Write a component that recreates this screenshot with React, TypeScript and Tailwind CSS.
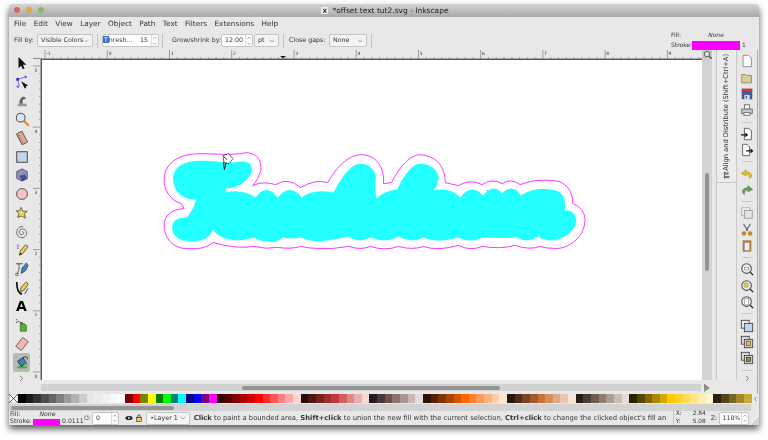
import { ChevronDown, ChevronRight, ChevronLeft, ChevronUp } from 'lucide-react'
import type { ReactNode } from 'react'

const menus = ['File', 'Edit', 'View', 'Layer', 'Object', 'Path', 'Text', 'Filters', 'Extensions', 'Help']

const swatches = [
  '#000000', '#1a1a1a', '#333333', '#4d4d4d', '#666666', '#808080', '#999999', '#b3b3b3', '#cccccc', '#e6e6e6', '#ececec', '#f2f2f2', '#f9f9f9', '#ffffff',
  '#800000', '#ff0000', '#808000', '#ffff00', '#008000', '#00ff00', '#008080', '#00ffff', '#000080', '#0000ff', '#800080', '#ff00ff',
  '#2b0000', '#550000', '#800000', '#aa0000', '#d40000', '#ff0000', '#ff2a2a', '#ff5555', '#ff8080', '#ffaaaa', '#ffd5d5',
  '#280b0b', '#501616', '#782121', '#a02c2c', '#c83737', '#d35f5f', '#de8787', '#e9afaf', '#f4d7d7',
  '#241c1c', '#483737', '#6c5353', '#916f6f', '#ac9393', '#c8b7b7', '#e3dbdb',
  '#2b1100', '#552200', '#803300', '#aa4400', '#d45500', '#ff6600', '#ff7f2a', '#ff9955', '#ffb380', '#ffccaa', '#ffe6d5',
  '#28170b', '#502d16', '#784421', '#a05a2c', '#c87137', '#d38d5f', '#deaa87', '#e9c6af', '#f4e3d7',
  '#241f1c', '#483e37', '#6c5d53', '#917c6f', '#ac9d93', '#c8beb7', '#e3dedb',
  '#2b2200', '#554400', '#806600', '#aa8800', '#d4aa00', '#ffcc00', '#ffd42a', '#ffdd55', '#ffe680', '#ffeeaa', '#fff6d5',
  '#28220b', '#504416', '#786721', '#a0892c', '#c8ab37',
]

function Ico({ children }: { children: ReactNode }) {
  return (
    <svg viewBox="0 0 16 16" className="h-[14px] w-[14px]">
      {children}
    </svg>
  )
}

const leftTools: ReactNode[] = [
  <path d="M4 1 L4 14 L7 11 L9 15 L11 14 L9 10 L13 10 Z" fill="#111" />,
  <g><path d="M3 5 L5 13 M3 5 L12 2" stroke="#6a6ac8" fill="none" /><rect x="1.5" y="3.5" width="3" height="3" fill="#2020e0" /><rect x="11" y="1" width="2.5" height="2.5" fill="#6a6ae0" /><rect x="2" y="12" width="2.5" height="2.5" fill="#6a6ae0" /><path d="M7 7 L15 12 L12 13 L13 15 L11 15 Z" fill="#111" /></g>,
  <g><path d="M3 14 L14 14 L13 11 L3 11 Z" fill="#999" /><path d="M5 11 C5 4 9 2 12 4 C13 6 11 6 10 6 C8 7 9 10 9 11 Z" fill="#666" /></g>,
  <g><path d="M10 10 L15 15" stroke="#e0952a" strokeWidth="2.6" strokeLinecap="round" /><circle cx="6.5" cy="6.5" r="5" fill="#d6e6f4" stroke="#555" strokeWidth="1.2" /></g>,
  <g transform="rotate(-28 8 8)"><rect x="4.5" y="1" width="7" height="14" fill="#e8a890" stroke="#555" /><path d="M4.5 4h3M4.5 7h3M4.5 10h3M4.5 13h3" stroke="#555" strokeWidth="0.7" /></g>,
  <rect x="2" y="2" width="12" height="12" fill="#c4d6ea" stroke="#444" strokeWidth="1.1" />,
  <g><path d="M8 1 L14 4 L14 12 L8 15 L2 12 L2 4 Z" fill="#8f8fc0" stroke="#555" /><path d="M5 9 L11 7 L14 12 L8 15 Z" fill="#4a4a96" /></g>,
  <circle cx="8" cy="8" r="6.2" fill="#f8c0c8" stroke="#555" strokeWidth="1.1" />,
  <path d="M7 1.5 L9 6 L14 6 L10.5 9 L12 14 L7.5 11.5 L3 13 L4.5 9 L1.5 5.5 L5.5 5.5 Z" fill="#f2d84a" stroke="#555" />,
  <path d="M8 8 C9.5 6.8 11 9 9 10.5 C6.5 12 4 9.5 5 7 C6.5 3.5 11.5 3.8 13 7.5 C14.3 11 11.5 14.5 8 14.5 C4 14.5 1.5 11 2 7.5 C2.6 3.5 6 1.3 9.5 1.8" fill="none" stroke="#666" strokeWidth="1.1" />,
  <g><path d="M2 3 C4 1 5 3 3 5 C2 7 4 7 4 6" fill="none" stroke="#555" strokeWidth="0.9" /><path d="M5 14 L6 9 L12 2 L15 4 L9 12 Z" fill="#f2cf4a" stroke="#444" strokeWidth="0.9" /><path d="M5 14 L6 11 L8 12.5 Z" fill="#222" /></g>,
  <g><path d="M1 2 L9 2 M4 2 C6 6 4 11 2 14" fill="none" stroke="#444" /><rect x="1" y="13" width="2.5" height="2.5" fill="#fff" stroke="#333" strokeWidth="0.7" /><path d="M7 13 L8 7 L13 1 L15 4 L12 10 Z" fill="#3c83c8" stroke="#333" strokeWidth="0.8" /></g>,
  <g><path d="M2 1 C2 9 4 14 8 15" fill="none" stroke="#111" strokeWidth="2" /><path d="M6 12 L7 7 L13 1 L15 4 L10 11 Z" fill="#f2cf4a" stroke="#333" strokeWidth="0.8" /><path d="M11 15 L15 8" stroke="#3c83c8" strokeWidth="1.2" /></g>,
  null,
  <g><path d="M1 2h1.5M3 4h1.5M1 5h1.5" stroke="#333" strokeWidth="1" /><path d="M5 4 L9 5 L9 7 L6 7 Z" fill="#555" /><path d="M6 8 C6 6 13 6 13 9 L13 15 L6 15 Z" fill="#5cb030" stroke="#2d6a12" strokeWidth="0.8" /></g>,
  <g transform="rotate(38 8 8)"><rect x="4" y="1.5" width="8" height="13" fill="#f4b8a8" stroke="#666" /></g>,
  <g><ellipse cx="8" cy="14" rx="6" ry="1.5" fill="#4fa83a" /><path d="M3 7 L9 3 L13 9 L7 13 Z" fill="#3c83c8" stroke="#222" strokeWidth="0.9" /><path d="M9 3 C13 1 15 3 14 5" fill="none" stroke="#222" /><path d="M12 8 L14 12" stroke="#4fa83a" strokeWidth="1.4" /></g>,
]

const topRight: (ReactNode | 'sep')[] = [
  <path d="M3.5 1.5 H10 L13 4.5 V14.5 H3.5 Z" fill="#fff" stroke="#888" />,
  <path d="M2 4 H6 L7 5 H13 V13.5 H2 Z" fill="#d8d098" stroke="#8a8460" />,
  <g><rect x="2" y="2" width="12" height="12" fill="#3a5aa8" /><rect x="2" y="2" width="12" height="3" fill="#e03030" /><rect x="5" y="9" width="6" height="5" fill="#e8e8e8" /><rect x="6.5" y="10" width="1.6" height="3" fill="#3a5aa8" /></g>,
  <g><rect x="5" y="2" width="6" height="5" fill="#fff" stroke="#666" /><rect x="2" y="7" width="12" height="5" fill="#ccc" stroke="#666" /><rect x="4.5" y="11" width="7" height="3" fill="#fff" stroke="#666" /></g>,
  'sep',
  <g><path d="M5 1.5 H10 L13 4.5 V14.5 H5 Z" fill="#fff" stroke="#555" /><path d="M1 9 H8 M6 7 L8.5 9 L6 11" fill="none" stroke="#111" strokeWidth="1.2" /></g>,
  <g><path d="M3 1.5 H8 L11 4.5 V14.5 H3 Z" fill="#fff" stroke="#555" /><path d="M7 9 H14 M12 7 L14.5 9 L12 11" fill="none" stroke="#111" strokeWidth="1.2" /></g>,
  'sep',
  <path d="M7 3 L1.5 7.5 L7 10 L7 8 C10 8 11 10 11 13 C14 12 15 6 7 5.5 Z" fill="#e8c020" stroke="#9a8010" strokeWidth="0.6" />,
  <path d="M9 3 L14.5 7.5 L9 10 L9 8 C6 8 5 10 5 13 C2 12 1 6 9 5.5 Z" fill="#6aa060" stroke="#4a7040" strokeWidth="0.6" />,
  'sep',
  <g><rect x="2" y="2" width="9" height="9" fill="#f0f0f0" stroke="#aaa" /><rect x="5" y="5" width="9" height="9" fill="#e4e4e4" stroke="#999" /></g>,
  <g><path d="M4 1 L9 9 M12 1 L7 9" stroke="#666" strokeWidth="1.2" /><circle cx="4.5" cy="12" r="2.6" fill="#c8862a" /><circle cx="11.5" cy="12" r="2.6" fill="#c8862a" /></g>,
  <g><rect x="3" y="1.5" width="10" height="13" fill="#b87a30" /><rect x="5" y="4" width="6" height="9" fill="#f2f2f2" stroke="#888" strokeWidth="0.6" /></g>,
  'sep',
  <g><path d="M11 11 L15 15" stroke="#222" strokeWidth="1.6" /><circle cx="7.5" cy="7.5" r="5.5" fill="#e8eef4" stroke="#555" strokeWidth="1.2" /><rect x="5" y="6" width="5" height="3" fill="#fff" stroke="#777" strokeWidth="0.6" /></g>,
  <g><path d="M11 11 L15 15" stroke="#222" strokeWidth="1.6" /><circle cx="7.5" cy="7.5" r="5.5" fill="#e8eef4" stroke="#555" strokeWidth="1.2" /><circle cx="7" cy="7" r="2.6" fill="#e8c83a" stroke="#666" strokeWidth="0.5" /></g>,
  <g><path d="M11 11 L15 15" stroke="#222" strokeWidth="1.6" /><circle cx="7.5" cy="7.5" r="5.5" fill="#e8eef4" stroke="#555" strokeWidth="1.2" /><rect x="5.5" y="4" width="4" height="7" fill="#fff" stroke="#777" strokeWidth="0.6" /></g>,
  'sep',
  <g><rect x="1.5" y="1.5" width="9" height="9" fill="#eee" stroke="#444" /><rect x="5" y="5" width="9.5" height="9.5" fill="#bcd4ec" stroke="#444" /></g>,
  <g><rect x="1.5" y="1.5" width="9" height="9" fill="#ddd" stroke="#444" /><rect x="5" y="5" width="9.5" height="9.5" fill="#ccc" stroke="#444" /><rect x="7.5" y="7.5" width="4.5" height="4.5" fill="#e8c83a" stroke="#444" strokeWidth="0.7" /></g>,
  <g><rect x="1.5" y="1.5" width="9" height="9" fill="#ddd" stroke="#444" /><rect x="5" y="5" width="9.5" height="9.5" fill="#ccc" stroke="#444" /><rect x="7.5" y="7.5" width="4.5" height="4.5" fill="#6aa83a" stroke="#222" strokeWidth="0.7" /></g>,
  'sep',
]

function Dropdown({ label, className }: { label: string; className: string }) {
  return (
    <div className={'flex h-[13px] items-center justify-between rounded-[2px] border border-[#c4c4c4] bg-[#f4f4f4] pl-[3px] pr-[2px] ' + className}>
      <span>{label}</span>
      <ChevronDown size={8} strokeWidth={1.6} className="text-[#555]" />
    </div>
  )
}

function Spin({ children, className }: { children: ReactNode; className: string }) {
  return (
    <div className={'flex h-[13px] items-center justify-between rounded-[2px] border border-[#c4c4c4] bg-white pl-[3px] ' + className}>
      {children}
      <div className="flex h-full w-[7px] flex-col items-center justify-center border-l border-[#ddd] text-[#444]">
        <ChevronUp size={6} strokeWidth={2} />
        <ChevronDown size={6} strokeWidth={2} />
      </div>
    </div>
  )
}

function Sep() {
  return <div className="h-[14px] w-px bg-[#c2c2c2]" />
}

function HRuler() {
  const ticks = Array.from({ length: 86 }, (_, i) => 45 + i * 7.78)
  const labels = ['-1', '0', '1', '2', '3', '4', '5', '6', '7', '8', '9']
  return (
    <svg viewBox="41 50 661 9" className="block h-[9px] w-full">
      <path d="M41 58.5 H702" stroke="#777" strokeWidth="0.6" />
      {ticks.map((x, i) => (
        <path key={i} d={'M' + x + ' ' + (i % 8 === 0 ? 50 : 57) + ' V58.5'} stroke="#555" strokeWidth="0.5" />
      ))}
      {labels.map((t, i) => (
        <text key={t} x={46.5 + i * 62.2} y={54.5} fontSize="4.5" fill="#333" fontFamily="DejaVu Sans">{t}</text>
      ))}
      <path d="M280 56 H286 L283 58.5 Z" fill="#222" />
    </svg>
  )
}

function VRuler() {
  const ticks = Array.from({ length: 42 }, (_, i) => 66 + (i - 1) * 7.65)
  const labels = ['5', '4', '3', '2', '1', '0']
  return (
    <svg viewBox="33 59 8 321" className="block h-full w-[8px]">
      <path d="M40.6 59 V380" stroke="#777" strokeWidth="0.6" />
      {ticks.map((y, i) => (
        <path key={i} d={'M' + ((i - 1) % 8 === 0 ? 33 : 39) + ' ' + y + ' H40.6'} stroke="#555" strokeWidth="0.5" />
      ))}
      {labels.map((t, i) => (
        <text key={t} x={34.5} y={71.5 + i * 61.2} fontSize="4.5" fill="#333" fontFamily="DejaVu Sans">{t}</text>
      ))}
    </svg>
  )
}

function Drawing() {
  return (
    <svg viewBox="41 59 661 321" className="block h-full w-full">
      <path
        d="M163 177 C165 160 180 153 200 153 C215 153 230 155 245 152 C255 152 261 158 260 170 Q258 178 252 185 Q262 180 275 184 Q287 176 300 187 Q315 178 327 182 C337 165 348 154 362 154 C375 155 384 165 383 183 L391 182 C400 165 410 154 420 154 C435 155 445 165 445 182 L458 185 Q470 178 482 184 Q492 177 502 183 Q511 177 520 184 Q535 178 553 180 C565 180 573 190 573 203 C583 207 586 215 585 222 C583 240 565 249 555 248 Q546 248 540 246 Q530 250 515 245 Q500 249 482 246 Q470 251 458 245 Q437 251 423 246 Q412 250 398 246 Q385 251 370 246 Q360 250 348 246 Q332 249 317 248 Q308 248 300 246 Q290 249 277 247 Q265 249 253 246 Q235 249 212 242 C205 248 195 249 190 248 C175 250 163 240 163 225 C163 215 170 209 183 208 L180 203 C170 200 162 190 163 177 Z"
        fill="#fff"
        stroke="#ff33ff"
        strokeWidth="1"
      />
      <path
        d="M172 178 C172 165 185 160 200 160 C215 160 225 163 240 161 C248 160 252 165 251 170 C249 178 240 187 225 188 L224 192 Q240 188 255 197 Q265 182 277 197 Q289 182 301 197 Q312 188 333 192 C340 178 350 163 360 163 C370 163 377 172 375 180 Q374 188 376 198 Q384 190 397 189 C403 175 412 163 420 163 C432 163 440 172 438 180 Q437 186 433 190 Q450 186 460 197 Q471 182 483 195 Q493 182 502 193 Q512 182 521 195 Q535 186 550 189 C565 190 566 200 565 210 C575 209 577 218 576 222 C575 232 560 240 553 240 Q544 240 538 236 Q527 243 517 237 Q500 238 483 237 Q470 243 458 237 Q437 243 423 237 Q412 243 398 236 Q385 243 370 237 Q358 243 348 236 Q335 239 320 241 Q310 241 300 237 Q291 239 282 237 Q275 243 267 241 Q260 241 253 237 Q232 243 220 236 Q215 234 212 229 C209 238 200 241 192 241 C180 241 171 237 171 227 C171 220 178 217 185 217 C190 213 193 206 195 199 C183 199 172 192 172 178 Z"
        fill="#22ffff"
      />
      <rect x="487" y="189.5" width="1" height="1" fill="#ff33ff" />
      <path d="M222 155 L228 153 L232 158 L228 163 L223 162 Z" fill="#fff" stroke="#222" strokeWidth="0.7" />
      <path d="M223 156 L226 159 M222.5 162 L223.5 169 L225 162" stroke="#111" strokeWidth="1" fill="none" />
    </svg>
  )
}

export default function App() {
  return (
    <div className="h-[440px] w-[768px] overflow-hidden whitespace-nowrap bg-white pl-[9px] pt-[4px] font-['DejaVu_Sans',sans-serif] text-[7px] leading-none text-[#333] blur-[0.35px]">
      <div className="flex h-[421px] w-[750px] flex-col overflow-hidden rounded-t-[4px] bg-[#e8e8e8] shadow-[0_4px_7px_rgba(0,0,0,0.65)]">
        <div className="relative flex h-[13px] shrink-0 items-center justify-center bg-gradient-to-b from-[#d4d4d4] to-[#a9a9a9] text-[7.5px] text-[#222]">
          <div className="absolute left-[5px] top-[3px] flex gap-[6px]">
            <span className="h-[6px] w-[6px] rounded-full bg-[#d8615c]" />
            <span className="h-[6px] w-[6px] rounded-full bg-[#dfa742]" />
            <span className="h-[6px] w-[6px] rounded-full bg-[#83bb62]" />
          </div>
          <span className="mr-[4px] ml-[2px] flex h-[7px] w-[7px] items-center justify-center bg-[#eee] text-[6px] font-bold text-[#333]">X</span>
          <span>*offset text tut2.svg - Inkscape</span>
        </div>

        <div className="flex h-[14px] shrink-0 items-center gap-[7.5px] pl-[5px] text-[7.3px]">
          {menus.map((m) => (
            <span key={m}>{m}</span>
          ))}
        </div>

        <div className="relative flex h-[19px] shrink-0 items-center pl-[5px] text-[6.3px]">
          <span className="w-[23px]">Fill by:</span>
          <Dropdown label="Visible Colors" className="w-[56px]" />
          <div className="mx-[4px]"><Sep /></div>
          <Spin className="w-[57px] !pl-0">
            <span><span className="bg-[#3a6fc8] px-[1px] text-white">T</span>hresh...</span>
            <span className="ml-auto mr-[3px]">15</span>
          </Spin>
          <div className="ml-[3px] mr-[9px]"><Sep /></div>
          <span className="w-[49px]">Grow/shrink by:</span>
          <Spin className="w-[32px]">12.00</Spin>
          <Dropdown label="pt" className="ml-px w-[25px]" />
          <div className="mx-[4px]"><Sep /></div>
          <span className="ml-[1px] w-[40px]">Close gaps:</span>
          <Dropdown label="None" className="w-[38px]" />
          <div className="ml-[4px]"><Sep /></div>
          <div className="ml-auto mr-[14px] flex flex-col gap-[2px] text-[6px]">
            <div className="flex h-[7px] items-center">
              <span className="w-[21px]">Fill:</span>
              <span className="w-[48px] text-center italic">None</span>
            </div>
            <div className="flex h-[9px] items-center">
              <span className="w-[21px]">Stroke:</span>
              <span className="h-[9px] w-[48px] bg-[#ff00ff]" />
              <span className="ml-[2px] w-[3px]">1</span>
            </div>
          </div>
        </div>

        <div className="flex min-h-0 flex-1">
          <div className="flex w-[24px] shrink-0 flex-col items-center pt-[4px] pl-[1px]">
            {leftTools.map((icon, i) => (
              <div key={i} className={'flex h-[18.7px] w-[17px] items-center justify-center rounded-[2px] ' + (i === 16 ? 'bg-[#b9b9b9]' : '')}>
                {icon === null ? <span className="text-[14px] font-bold text-black">A</span> : <Ico>{icon}</Ico>}
              </div>
            ))}
            <ChevronRight size={9} strokeWidth={2} className="mt-[2px] text-[#555]" />
          </div>

          <div className="flex w-[679px] shrink-0 flex-col">
            <div className="grid min-h-0 flex-1 grid-cols-[8px_661px_10px] grid-rows-[9px_1fr]">
              <div className="border-b border-[#888]" />
              <HRuler />
              <div className="flex items-start justify-center bg-[#c4c4c4] pl-[1px]">
                <svg viewBox="0 0 10 10" className="h-[9px] w-[9px]">
                  <circle cx="4.5" cy="4.5" r="3" fill="#ddd" stroke="#555" />
                  <path d="M7 7 L9.5 9.5" stroke="#333" strokeWidth="1.2" />
                </svg>
              </div>
              <VRuler />
              <div className="min-h-0 border-l border-t border-[#555] bg-white">
                <Drawing />
              </div>
              <div className="bg-[#d4d4d4] pl-[2px]">
                <div className="ml-[0.5px] mt-[114px] h-[98px] w-[4px] rounded-full bg-[#949494]" />
              </div>
            </div>
            <div className="flex h-[14px] shrink-0 pb-[3px] pl-[8px] pt-[4px]">
              <div className="flex h-[7px] w-[660px] items-center bg-[#d2d2d2]">
                <div className="ml-[201px] h-[4px] w-[258px] rounded-full bg-[#949494]" />
              </div>
              <svg viewBox="0 0 8 8" className="ml-[2px] h-[8px] w-[8px]">
                <path d="M1 0 L7 4 L1 8 Z" fill="#6aa86a" />
                <path d="M1 0 L4 2 L1 4 Z" fill="#b060b0" />
              </svg>
            </div>
          </div>

          <div className="ml-[4px] flex h-[330px] w-[21px] shrink-0 flex-col border-x border-[#c8c8c8] bg-[#ececec]">
            <div className="flex h-[133px] flex-col items-center justify-start border-b border-[#c8c8c8] pt-[4px]">
              <div className="flex rotate-180 items-center text-[6.7px] text-[#333] [writing-mode:vertical-rl]">
                <svg viewBox="0 0 8 8" className="mb-[1px] h-[7px] w-[7px] rotate-90">
                  <rect x="0" y="1" width="8" height="1" fill="#b04040" />
                  <rect x="1" y="2" width="2" height="5" fill="#6a8ab0" stroke="#444" strokeWidth="0.4" />
                  <rect x="5" y="2" width="2" height="4" fill="#6a8ab0" stroke="#444" strokeWidth="0.4" />
                </svg>
                <span>Align and Distribute (Shift+Ctrl+A)</span>
              </div>
            </div>
          </div>

          <div className="flex w-[21px] shrink-0 flex-col items-center border-r border-[#a8a8a8] pt-[3px]">
            {topRight.map((icon, i) =>
              icon === 'sep' ? (
                <div key={i} className="my-[3px] h-px w-[11px] bg-[#c8c8c8]" />
              ) : (
                <div key={i} className="flex h-[16.4px] items-center justify-center">
                  <Ico>{icon}</Ico>
                </div>
              ),
            )}
            <ChevronRight size={9} strokeWidth={2} className="text-[#555]" />
          </div>
        </div>

        <div className="flex h-[9px] shrink-0 items-center">
          <svg viewBox="0 0 9 9" className="h-[9px] w-[9px] shrink-0 bg-white">
            <rect x="0" y="0" width="9" height="9" fill="none" stroke="#888" strokeWidth="0.6" />
            <path d="M0 0 L9 9 M9 0 L0 9" stroke="#a02020" strokeWidth="0.9" />
          </svg>
          <div className="flex h-full w-[733px] shrink-0">
            {swatches.map((c, i) => (
              <span key={i} className="h-full flex-1" style={{ backgroundColor: c }} />
            ))}
          </div>
          <ChevronLeft size={8} strokeWidth={2} className="ml-[1px] text-[#444]" />
        </div>

        <div className="mt-[1px] mr-[8px] flex h-[7px] shrink-0 items-center bg-[#d2d2d2] pl-[2px]">
          <div className="h-[4px] w-[163px] rounded-full bg-[#949494]" />
        </div>

        <div className="flex h-[14px] shrink-0 items-center text-[6.2px]">
          <div className="ml-[1px] flex w-[74px] shrink-0 flex-col gap-[1px]">
            <div className="flex h-[6px] items-center">
              <span className="w-[24px]">Fill:</span>
              <span className="w-[27px] text-center italic">None</span>
            </div>
            <div className="flex h-[6px] items-center">
              <span className="w-[23px]">Stroke:</span>
              <span className="h-[6px] w-[27px] bg-[#ff00ff]" />
              <span className="ml-[2px]">0.0111</span>
            </div>
          </div>
          <span className="w-[8px] text-[#666]">O:</span>
          <Spin className="w-[27px]">0</Spin>
          <span className="ml-[6px] w-[10px]">
            <svg viewBox="0 0 10 10" className="h-[8px] w-[8px]"><ellipse cx="5" cy="5" rx="4.5" ry="2.6" fill="#222" /><circle cx="5" cy="5" r="1.2" fill="#eee" /></svg>
          </span>
          <span className="ml-[1px] w-[11px]">
            <svg viewBox="0 0 10 10" className="h-[8px] w-[8px]"><rect x="2" y="4.5" width="6" height="5" fill="#e8d050" stroke="#333" strokeWidth="0.8" /><path d="M3.5 4.5 V2.5 C3.5 0.5 6.5 0.5 6.5 2.5 V4.5" fill="none" stroke="#333" /></svg>
          </span>
          <Dropdown label="•Layer 1" className="w-[44px] text-[6.4px]" />
          <div className="ml-[4px] w-[476px] shrink-0 text-[6.8px] text-[#333]">
            <b>Click</b> to paint a bounded area, <b>Shift+click</b> to union the new fill with the current selection, <b>Ctrl+click</b> to change the clicked object's fill an
          </div>
          <div className="ml-[3px] flex h-[14px] w-[37px] shrink-0 flex-col justify-between border-l border-[#c4c4c4] pl-[2px] text-[5.8px]">
            <div className="flex justify-between pr-[4px]"><span>X:</span><span>2.84</span></div>
            <div className="flex justify-between pr-[4px]"><span>Y:</span><span>5.08</span></div>
          </div>
          <span className="ml-[1px] w-[8px]">Z:</span>
          <Spin className="w-[31px]">118%</Spin>
          <svg viewBox="0 0 8 8" className="ml-[2px] mt-[6px] h-[8px] w-[8px]">
            <path d="M1 8 L8 1 M4 8 L8 4 M7 8 L8 7" stroke="#999" strokeWidth="0.8" />
          </svg>
        </div>
      </div>
    </div>
  )
}
